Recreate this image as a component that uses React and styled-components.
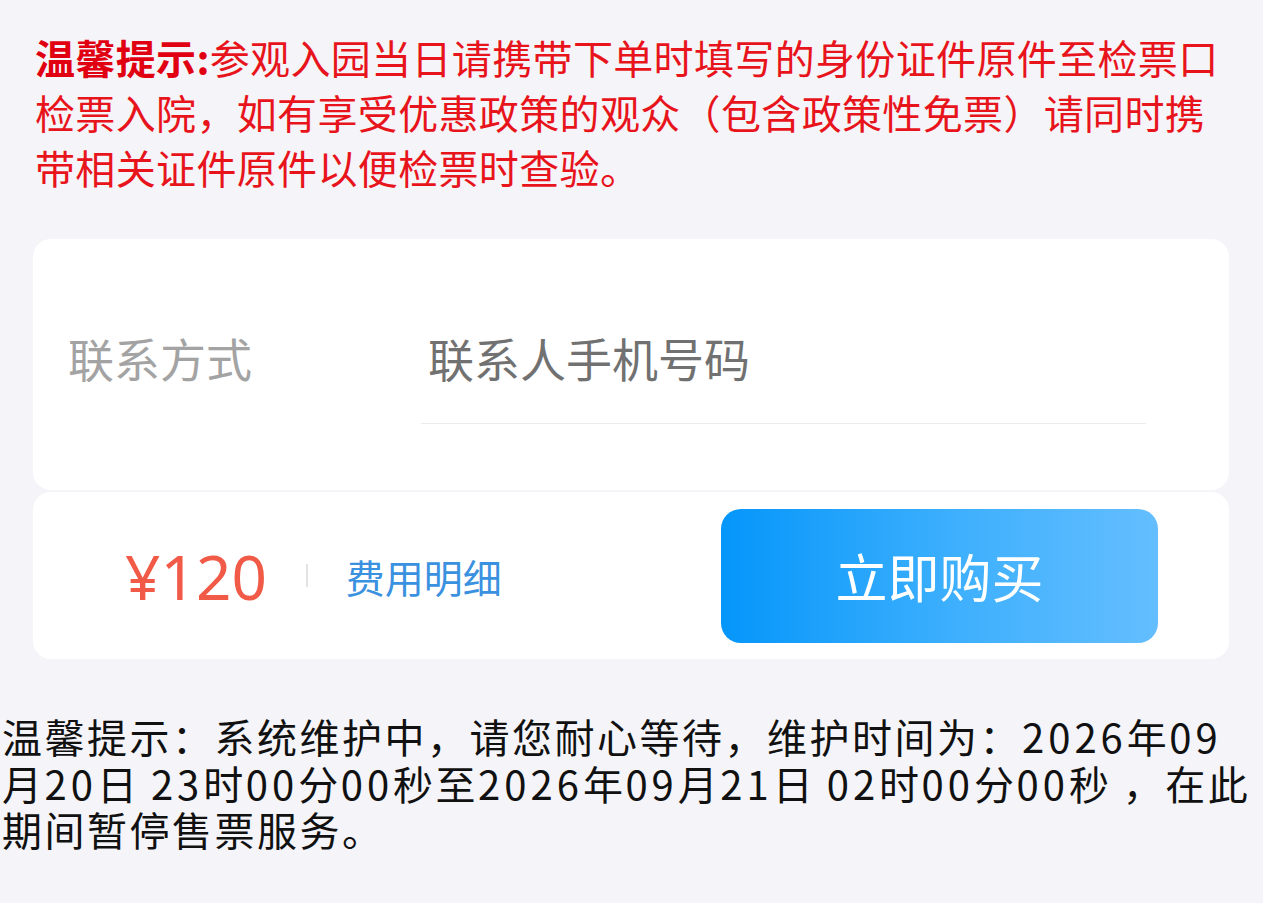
import React from "react";
import styled, { createGlobalStyle } from "styled-components";

const COLORS = {
  page: "#f5f5f9",
  red: "#e8141c",
  redStrong: "#e00012",
  label: "#a3a3a3",
  placeholder: "#717171",
  line: "#ececec",
  price: "#f05a46",
  link: "#3a91e0",
  text: "#111111",
};

const FONT = `"Noto Sans CJK SC", "Noto Sans", sans-serif`;

const GlobalStyle = createGlobalStyle`
  body {
    margin: 0;
    background: ${COLORS.page};
    font-family: ${FONT};
  }
`;

const App = () => {
  return (
    <>
      <GlobalStyle />
      <Page>
        <Notice>
          <NoticeTitle>温馨提示:</NoticeTitle>
          参观入园当日请携带下单时填写的身份证件原件至检票口检票入院，如有享受优惠政策的观众（包含政策性免票）请同时携带相关证件原件以便检票时查验。
        </Notice>

        <FormCard>
          <FieldRow>
            <FieldLabel>联系方式</FieldLabel>
            <PhoneInput type="tel" placeholder="联系人手机号码" />
          </FieldRow>
        </FormCard>

        <PayBar>
          <Price>¥120</Price>
          <Divider />
          <DetailLink href="#detail">费用明细</DetailLink>
          <BuyButton type="button">立即购买</BuyButton>
        </PayBar>

        <Maintenance>
          温馨提示：系统维护中，请您耐心等待，维护时间为：<Num>2026</Num>年
          <Num>09</Num>
          <br />
          月<Num>20</Num>日 <Num>23</Num>时<Num>00</Num>分<Num>00</Num>秒至
          <Num>2026</Num>年<Num>09</Num>月<Num>21</Num>日 <Num>02</Num>时
          <Num>00</Num>分<Num>00</Num>秒 ，在此
          <br />
          期间暂停售票服务。
        </Maintenance>
      </Page>
    </>
  );
};

const Page = styled.div`
  display: flex;
  flex-direction: column;
  padding-top: 30px;
`;

const Notice = styled.p`
  margin: 0;
  padding: 0 35px;
  font-size: 40px;
  line-height: 55px;
  letter-spacing: 0.35px;
  color: ${COLORS.red};
`;

const NoticeTitle = styled.strong`
  font-weight: 700;
  color: ${COLORS.redStrong};
`;

const Card = styled.section`
  margin: 0 34px 0 33px;
  background: #ffffff;
  border-radius: 18px;
`;

const FormCard = styled(Card)`
  margin-top: 44px;
  padding: 51px 83px 66px 35px;
`;

const FieldRow = styled.div`
  display: flex;
  align-items: center;
`;

const FieldLabel = styled.span`
  flex: 0 0 353px;
  font-size: 46px;
  color: ${COLORS.label};
`;

const PhoneInput = styled.input`
  flex: 1;
  height: 134px;
  box-sizing: border-box;
  padding: 0 0 0 7px;
  border: none;
  border-bottom: 1px solid ${COLORS.line};
  outline: none;
  background: transparent;
  font-family: ${FONT};
  font-size: 46px;
  color: #333;

  &::placeholder {
    color: ${COLORS.placeholder};
  }
`;

const PayBar = styled(Card)`
  margin-top: 2px;
  height: 167px;
  display: flex;
  align-items: center;
  padding: 0 71px 0 92px;
`;

const Price = styled.span`
  font-family: "Noto Sans", sans-serif;
  font-size: 62px;
  color: ${COLORS.price};
  line-height: 1;
`;

const Divider = styled.span`
  width: 2px;
  height: 23px;
  margin: 0 38px 0 39px;
  background: #e4e4e4;
`;

const DetailLink = styled.a`
  font-size: 39px;
  color: ${COLORS.link};
  text-decoration: none;
`;

const BuyButton = styled.button`
  margin-left: auto;
  width: 437px;
  height: 134px;
  border: none;
  border-radius: 20px;
  background: linear-gradient(90deg, #0596fa 0%, #3fb0fd 55%, #64befe 100%);
  color: #ffffff;
  font-family: ${FONT};
  font-size: 52px;
  cursor: pointer;
`;

const Maintenance = styled.p`
  margin: 54px 0 0;
  padding-left: 2px;
  font-size: 40px;
  line-height: 46.5px;
  letter-spacing: 2.5px;
  color: ${COLORS.text};
  white-space: nowrap;
`;

const Num = styled.span`
  letter-spacing: 4px;
`;

export default App;
